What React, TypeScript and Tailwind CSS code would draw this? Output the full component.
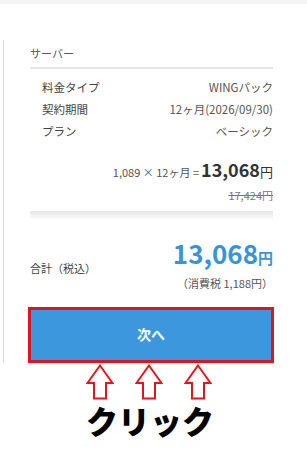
const UpArrow = () => (
    <svg width="28" height="36" viewBox="0 0 28 36">
        <path
            d="M14 1.5 L26.5 19 L20 19 L20 34.5 L8 34.5 L8 19 L1.5 19 Z"
            fill="white"
            stroke="#e3161e"
            strokeWidth="2"
            strokeLinejoin="miter"
        />
    </svg>
);

const Row = ({ label, value }: { label: string; value: string }) => (
    <div className="flex justify-between items-center h-[22px] pl-[12px] text-[11.5px]">
        <span className="text-[#444]">{label}</span>
        <span className="text-[#555]">{value}</span>
    </div>
);

const App = () => {
    return (
        <div
            className="w-[307px] h-[450px] bg-white overflow-hidden"
            style={{ fontFamily: '"Noto Sans CJK JP", "Noto Sans", sans-serif' }}
        >
            <div className="h-[4px] bg-[#f4f4f4]" />
            <div className="ml-[3px] mt-[36px] border-l border-[#dcdcdc] pl-[26px] pr-[34px]">
                <div className="pt-[6px] pb-[7px] border-b-2 border-[#e6e6e6] text-[11px] leading-[14px] text-[#555]">
                    サーバー
                </div>
                <div className="mt-[8px]">
                    <Row label="料金タイプ" value="WINGパック" />
                    <Row label="契約期間" value="12ヶ月(2026/09/30)" />
                    <Row label="プラン" value="ベーシック" />
                </div>
                <div className="mt-[13px] flex justify-end items-baseline h-[24px] text-[#555]">
                    <span className="text-[11px]">1,089 × 12ヶ月 = </span>
                    <span className="text-[18px] font-bold text-[#333] ml-[2px]">13,068</span>
                    <span className="text-[13px] text-[#333]">円</span>
                </div>
                <div className="mt-[4px] flex justify-end h-[22px] items-center">
                    <span className="text-[11px] text-[#777] line-through">17,424円</span>
                </div>
                <div className="mt-[5px] h-[8px] bg-gradient-to-b from-[#e6e6e6] to-[#fbfbfb]" />
                <div className="mt-[19px] flex justify-between items-center">
                    <span className="text-[11px] text-[#444] mt-[6px]">合計（税込）</span>
                    <div className="flex flex-col items-end">
                        <div className="flex items-baseline text-[#3a93d8] font-bold leading-[30px]">
                            <span className="text-[26px]">13,068</span>
                            <span className="text-[15px]">円</span>
                        </div>
                        <span className="text-[11px] text-[#555] mt-[2px]">（消費税 1,188円）</span>
                    </div>
                </div>
                <div className="mt-[15px] -ml-[2px] -mr-[1px] h-[56px] border-[3px] border-[#e0141e] bg-[#3d97dd] flex items-center justify-center text-white font-bold text-[14px]">
                    次へ
                </div>
            </div>
            <div className="flex pl-[86px] gap-[21px] mt-[1px]">
                <UpArrow />
                <UpArrow />
                <UpArrow />
            </div>
            <div className="flex justify-center pr-[7px] mt-[2px] text-[32px] font-black text-black leading-[36px]">
                クリック
            </div>
        </div>
    );
};

export default App;
